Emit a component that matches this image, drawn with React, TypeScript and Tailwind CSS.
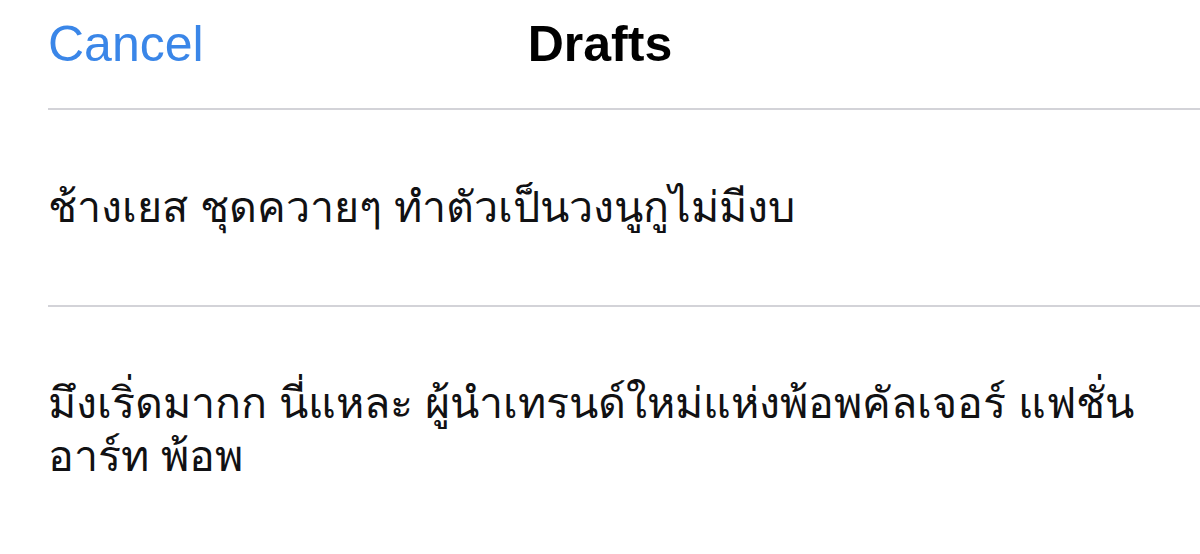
export default function App() {
  return (
    <div className="h-[554px] w-[1200px] overflow-hidden bg-white font-['Liberation_Sans',sans-serif]">
      <header className="relative h-[108px] pl-[48px] pt-[16px]">
        <button className="text-[50px] leading-[56px] text-[#3a86e8]">Cancel</button>
        <h1 className="absolute inset-x-0 top-[16px] text-center text-[50px] font-bold leading-[56px] text-black">
          Drafts
        </h1>
      </header>
      <div className="ml-[48px] border-t-2 border-[#d3d3d8]">
        <div className="flex h-[195px] items-center text-[43px] leading-[53px] text-[#111113]">
          ช้างเยส ชุดควายๆ ทำตัวเป็นวงนูกูไม่มีงบ
        </div>
        <div className="border-t-2 border-[#d3d3d8] pr-[40px] pt-[70px] text-[43px] leading-[53px] text-[#111113]">
          มึงเริ่ดมากก นี่แหละ ผู้นำเทรนด์ใหม่แห่งพ้อพคัลเจอร์ แฟชั่น อาร์ท พ้อพ
        </div>
      </div>
    </div>
  );
}
